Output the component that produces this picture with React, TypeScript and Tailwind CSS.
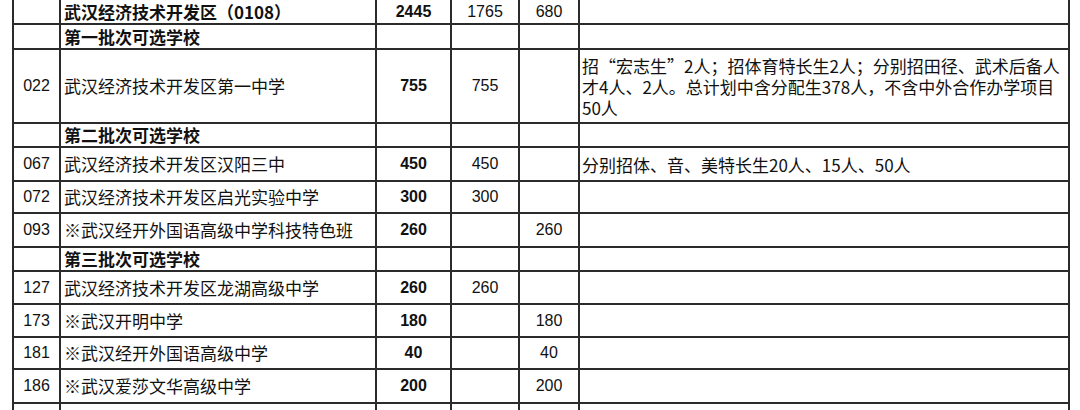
import React from "react";

type Row = {
  h: string;
  code?: string;
  name?: string;
  header?: boolean;
  total?: string;
  a?: string;
  b?: string;
  note?: React.ReactNode;
  last?: boolean;
};

const rows: Row[] = [
  { h: "h-[25px]", name: "武汉经济技术开发区（0108）", header: true, total: "2445", a: "1765", b: "680" },
  { h: "h-[25px]", name: "第一批次可选学校", header: true },
  {
    h: "h-[74px]",
    code: "022",
    name: "武汉经济技术开发区第一中学",
    total: "755",
    a: "755",
    note: (
      <>
        招“宏志生”2人；招体育特长生2人；分别招田径、武术后备人
        <br />
        才4人、2人。总计划中含分配生378人，不含中外合作办学项目
        <br />
        50人
      </>
    ),
  },
  { h: "h-[24px]", name: "第二批次可选学校", header: true },
  { h: "h-[34px]", code: "067", name: "武汉经济技术开发区汉阳三中", total: "450", a: "450", note: "分别招体、音、美特长生20人、15人、50人" },
  { h: "h-[32px]", code: "072", name: "武汉经济技术开发区启光实验中学", total: "300", a: "300" },
  { h: "h-[34px]", code: "093", name: "※武汉经开外国语高级中学科技特色班", total: "260", b: "260" },
  { h: "h-[24px]", name: "第三批次可选学校", header: true },
  { h: "h-[33px]", code: "127", name: "武汉经济技术开发区龙湖高级中学", total: "260", a: "260" },
  { h: "h-[33px]", code: "173", name: "※武汉开明中学", total: "180", b: "180" },
  { h: "h-[32px]", code: "181", name: "※武汉经开外国语高级中学", total: "40", b: "40" },
  { h: "h-[34px]", code: "186", name: "※武汉爱莎文华高级中学", total: "200", b: "200" },
  { h: "h-[12px]", last: true },
];

const numCell =
  "border-r-2 border-[#2b2b2b] flex items-center justify-center text-[16px] font-['Liberation_Sans','Noto_Sans_CJK_SC',sans-serif]";
const cjkCell =
  "border-r-2 border-[#2b2b2b] flex items-center whitespace-nowrap text-[17px] font-['Noto_Sans_CJK_SC','Liberation_Sans',sans-serif]";

export default function App() {
  return (
    <div className="w-[1080px] h-[410px] overflow-hidden bg-white text-[#111]">
      <div className="ml-[12px] w-[1058px] border-l-2 border-[#2b2b2b]">
        {rows.map((r, i) => (
          <div
            key={i}
            className={`grid grid-cols-[47px_316px_75px_68px_60px_490px] ${r.h} ${
              r.last ? "" : "border-b-2"
            } border-[#2b2b2b]`}
          >
            <div className={numCell}>{r.code}</div>
            <div className={`${cjkCell} pl-[3px] leading-[22px] ${r.header ? "font-bold" : ""}`}>{r.name}</div>
            <div className={`${numCell} font-bold`}>{r.total}</div>
            <div className={numCell}>{r.a}</div>
            <div className={numCell}>{r.b}</div>
            <div className={`${cjkCell} pl-[2px] leading-[21px]`}>
              <div>{r.note}</div>
            </div>
          </div>
        ))}
      </div>
    </div>
  );
}
